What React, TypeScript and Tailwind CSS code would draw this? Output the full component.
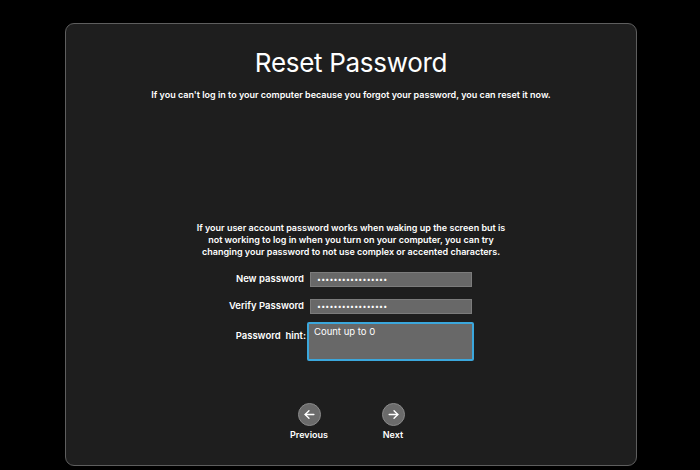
import React from 'react';

const ArrowCircle = ({ dir }: { dir: 'left' | 'right' }) => (
    <div className="w-[23px] h-[23px] rounded-full bg-[#6b6b6b] border border-[#8a8a8a] flex items-center justify-center">
        <svg width="13" height="13" viewBox="0 0 24 24" fill="none" stroke="#ffffff" strokeWidth="2.6" strokeLinecap="round" strokeLinejoin="round">
            {dir === 'left' ? (
                <>
                    <path d="M20 12H4" />
                    <path d="M11 5l-7 7 7 7" />
                </>
            ) : (
                <>
                    <path d="M4 12h16" />
                    <path d="M13 5l7 7-7 7" />
                </>
            )}
        </svg>
    </div>
);

const Field = ({ label, value }: { label: string; value: string }) => (
    <div className="flex items-center">
        <span className="w-[104px] pr-[6px] text-right text-[9.5px] font-semibold text-white">{label}</span>
        <div className="w-[162px] h-[15px] bg-[#686868] border border-[#7c7c7c] flex items-center pl-[6px] text-[7px] tracking-[0.2px] text-white leading-none">
            {value}
        </div>
    </div>
);

export default function App() {
    return (
        <div className="w-[700px] h-[470px] bg-black pt-[23px] pl-[65px]" style={{ fontFamily: 'Inter, "Liberation Sans", sans-serif' }}>
            <div className="w-[572px] h-[443px] rounded-[9px] border border-[#5e5e5e] bg-[#1e1e1e] flex flex-col items-center text-white">
                <h1 className="mt-[23px] text-[26px] leading-[32px] font-normal tracking-[-0.3px]">Reset Password</h1>
                <p className="mt-[10px] text-[9px] font-semibold leading-[12px]">
                    If you can't log in to your computer because you forgot your password, you can reset it now.
                </p>

                <p className="mt-[121px] w-[316px] text-center text-[9px] font-semibold leading-[12px]">
                    If your user account password works when waking up the screen but is not working to log in when you turn on your computer, you can try changing your password to not use complex or accented characters.
                </p>

                <div className="mt-[14px] ml-[-22px] flex flex-col">
                    <Field label="New password" value="•••••••••••••••••" />
                    <div className="mt-[12px]">
                        <Field label="Verify Password" value="•••••••••••••••••" />
                    </div>
                    <div className="mt-[8px] flex items-start">
                        <span className="w-[104px] pr-[4px] pt-[7px] text-right text-[9.5px] font-semibold text-white">Password&nbsp; hint:</span>
                        <div className="ml-[-3px] w-[167px] h-[39px] bg-[#686868] border-2 border-[#3ba7dc] rounded-[2px] pl-[5px] pt-[2px] text-[9.5px] text-white leading-[12px]">
                            Count up to 0
                        </div>
                    </div>
                </div>

                <div className="mt-[42px] flex gap-[46px]">
                    <div className="flex flex-col items-center w-[38px]">
                        <ArrowCircle dir="left" />
                        <span className="mt-[3px] text-[9px] leading-[11px] font-semibold">Previous</span>
                    </div>
                    <div className="flex flex-col items-center w-[38px]">
                        <ArrowCircle dir="right" />
                        <span className="mt-[3px] text-[9px] leading-[11px] font-semibold">Next</span>
                    </div>
                </div>
            </div>
        </div>
    );
}
